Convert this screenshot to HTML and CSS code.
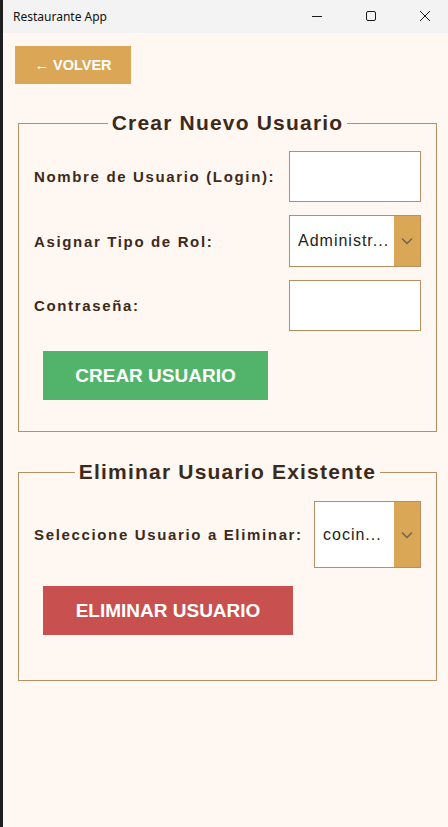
FILE: index.html
```html
<!DOCTYPE html>
<html lang="es">
<head>
<meta charset="utf-8">
<title>Restaurante App</title>
<link rel="stylesheet" href="styles.css">
</head>
<body>
<div class="window">
  <div class="titlebar">
    <span class="title">Restaurante App</span>
    <div class="controls">
      <span class="ctl"><svg width="12" height="12" viewBox="0 0 12 12"><path d="M1 6.5h10" stroke="#1a1a1a" stroke-width="1"/></svg></span>
      <span class="ctl"><svg width="12" height="12" viewBox="0 0 12 12"><rect x="1.5" y="1.5" width="9" height="9" rx="1.5" fill="none" stroke="#1a1a1a" stroke-width="1"/></svg></span>
      <span class="ctl"><svg width="12" height="12" viewBox="0 0 12 12"><path d="M1 1l10 10M11 1L1 11" stroke="#1a1a1a" stroke-width="1"/></svg></span>
    </div>
  </div>
  <main class="content">
    <button class="btn-back">&larr; VOLVER</button>

    <fieldset class="panel panel-create">
      <legend>Crear Nuevo Usuario</legend>
      <div class="row">
        <label class="lbl">Nombre de Usuario (Login):</label>
        <div class="field"></div>
      </div>
      <div class="row">
        <label class="lbl">Asignar Tipo de Rol:</label>
        <div class="select">
          <span class="select-value">Administr...</span>
          <span class="select-arrow"><svg width="12" height="8" viewBox="0 0 12 8"><path d="M1 1.5l5 5 5-5" fill="none" stroke="#6b6256" stroke-width="1.4"/></svg></span>
        </div>
      </div>
      <div class="row">
        <label class="lbl">Contraseña:</label>
        <div class="field"></div>
      </div>
      <button class="btn btn-green">CREAR USUARIO</button>
    </fieldset>

    <fieldset class="panel panel-delete">
      <legend>Eliminar Usuario Existente</legend>
      <div class="row row-delete">
        <label class="lbl">Seleccione Usuario a Eliminar:</label>
        <div class="select select-small">
          <span class="select-value">cocin...</span>
          <span class="select-arrow"><svg width="12" height="8" viewBox="0 0 12 8"><path d="M1 1.5l5 5 5-5" fill="none" stroke="#6b6256" stroke-width="1.4"/></svg></span>
        </div>
      </div>
      <button class="btn btn-red">ELIMINAR USUARIO</button>
    </fieldset>
  </main>
</div>
</body>
</html>
```
FILE: styles.css
```css
* { box-sizing: border-box; }
html, body { margin: 0; padding: 0; }
body {
  width: 448px;
  height: 827px;
  overflow: hidden;
  font-family: "Liberation Sans", Arial, sans-serif;
  background: #fff7f1;
}
.window {
  height: 827px;
  border-left: 3px solid #1f1f1f;
  display: flex;
  flex-direction: column;
}
.titlebar {
  height: 33px;
  background: #f3f3f3;
  display: flex;
  align-items: center;
  justify-content: space-between;
  flex-shrink: 0;
}
.title {
  font-family: "Noto Sans", "Open Sans", sans-serif;
  font-size: 12px;
  color: #111;
  padding-left: 10px;
  margin-top: -1px;
}
.controls {
  display: flex;
  height: 100%;
  gap: 8px;
}
.ctl {
  width: 46px;
  display: flex;
  align-items: center;
  justify-content: center;
  padding-bottom: 2px;
}
.content {
  flex: 1;
  background: #fff7f1;
  padding: 13px 11px 0 12px;
}
.btn-back {
  display: block;
  width: 116px;
  height: 38px;
  border: none;
  background: #dba655;
  color: #fff;
  font-family: "Liberation Sans", Arial, sans-serif;
  font-weight: bold;
  font-size: 14.5px;
  padding: 0;
  padding-bottom: 1px;
}
.panel {
  margin: 27px 0 0 3px;
  width: 419px;
  border: 1px solid #b88f62;
  padding: 16px 15px 31px 15px;
}
.panel legend {
  margin: 0 auto;
  padding: 0 4px;
  font-size: 21px;
  font-weight: bold;
  letter-spacing: 1.2px;
  color: #3b2a1c;
}
.row {
  display: flex;
  align-items: center;
  justify-content: space-between;
  margin-bottom: 13px;
}
.lbl {
  font-size: 15px;
  font-weight: bold;
  letter-spacing: 1.65px;
  color: #3b2a1c;
}
.field {
  width: 132px;
  height: 51px;
  background: #fff;
  border: 1px solid #b88f62;
}
.select {
  width: 132px;
  height: 52px;
  background: #fff;
  border: 1px solid #b88f62;
  display: flex;
}
.select-value {
  flex: 1;
  display: flex;
  align-items: center;
  padding-left: 8px;
  font-size: 16px;
  letter-spacing: 1px;
  color: #222;
  font-family: "Liberation Sans", Arial, sans-serif;
}
.select-arrow {
  width: 26px;
  background: #d9a756;
  display: flex;
  align-items: center;
  justify-content: center;
}
.btn {
  display: block;
  border: none;
  color: #fff;
  font-family: "Liberation Sans", Arial, sans-serif;
  font-weight: bold;
  font-size: 19px;
  height: 49px;
  margin-left: 9px;
  margin-top: 20px;
}
.btn-green { background: #52b46a; width: 225px; }
.btn-red { background: #c85150; width: 250px; }
.panel-delete {
  margin-top: 28px;
  padding-top: 17px;
  padding-bottom: 45px;
}
.row-delete { margin-bottom: 18px; }
.row-delete + .btn { margin-top: 0; }
.select-small { width: 107px; height: 67px; }
```
